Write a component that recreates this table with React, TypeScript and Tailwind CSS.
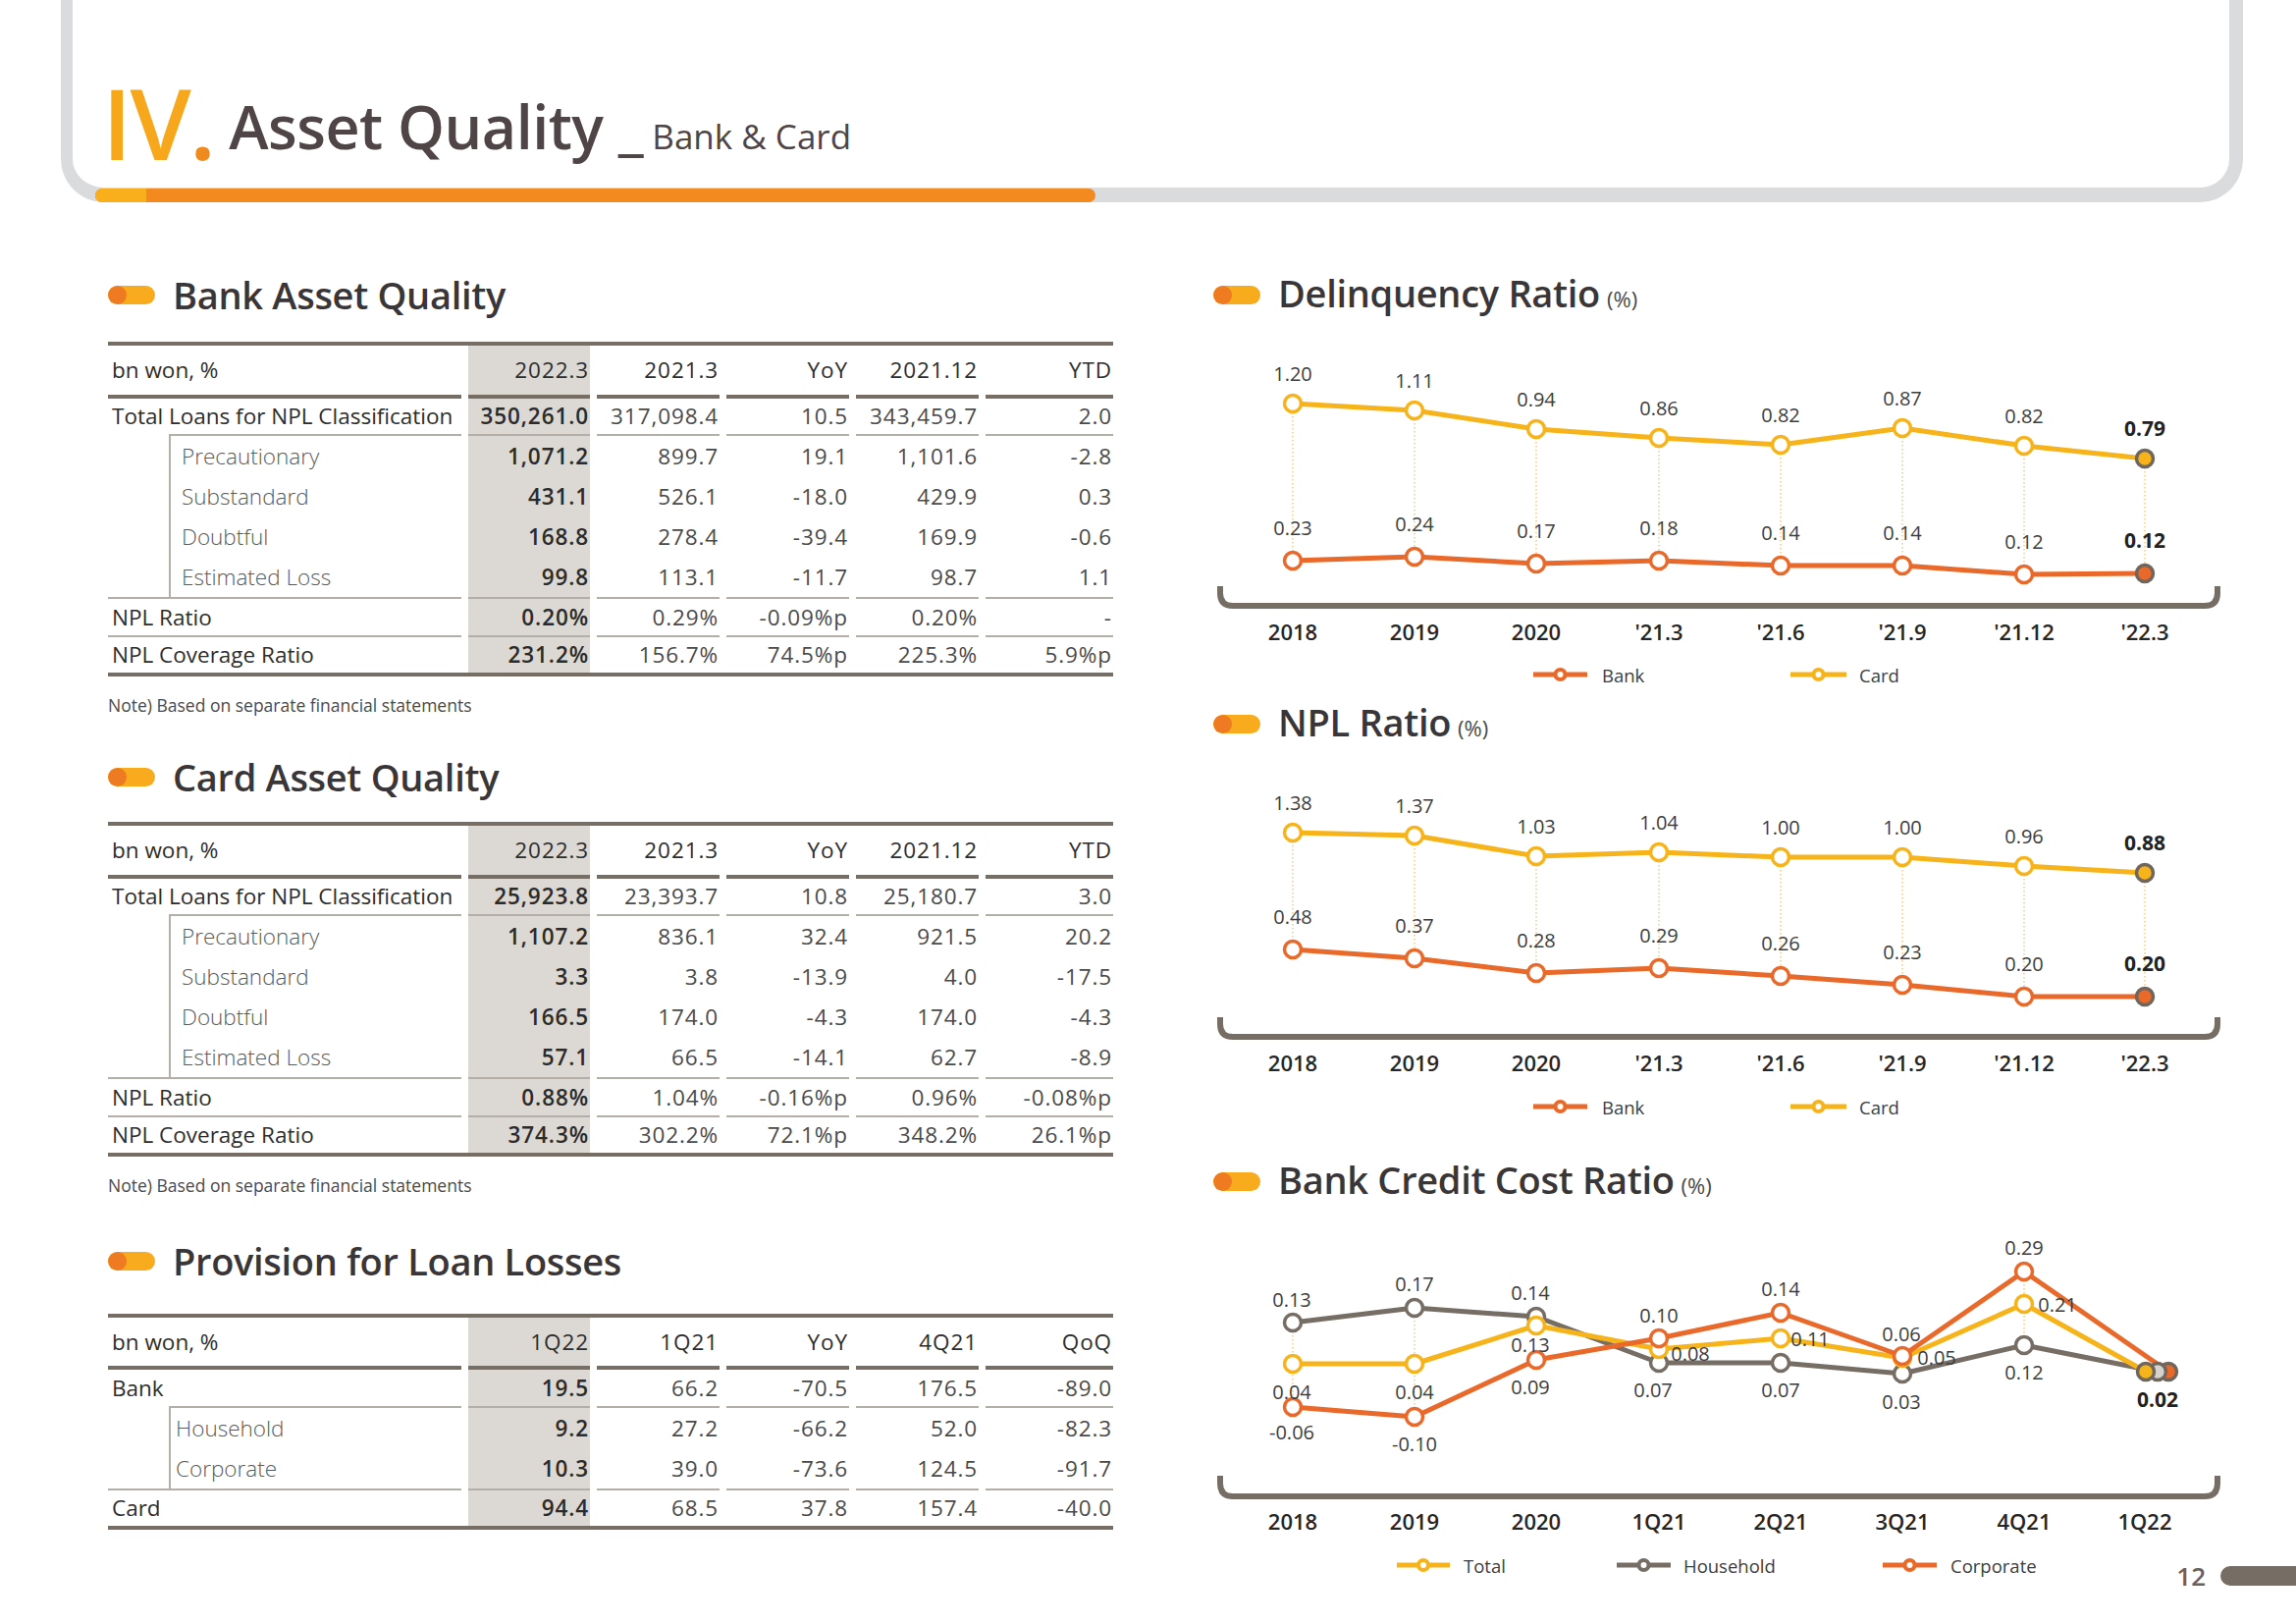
import React from "react";

// page is laid out at 1:1 pixels of the 2339x1654 slide
const XS = [1317, 1441, 1565, 1690, 1814, 1938, 2062, 2185];
const OX = 1236;

type Kind = "head" | "main" | "sub";
type Line = "thick" | "indent" | "thin" | "none";
interface Row {
  label: string;
  vals: string[];
  kind: Kind;
  h: string;
  line: Line;
}

const COLS = "grid grid-cols-[360px_124px_125px_125px_125px_130px] gap-x-[7px]";

const Pill = () => (
  <div className="flex h-[19px] w-[48px] shrink-0 overflow-hidden rounded-full bg-[#f8ab1c]">
    <div className="h-full w-[19px] rounded-full bg-[#ee7b22]" />
  </div>
);

const SectionTitle = ({ title, unit }: { title: string; unit?: string }) => (
  <div className="flex h-[60px] items-center">
    <Pill />
    <div className="ml-[18px] flex items-baseline">
      <h2 className="text-[38px] font-semibold leading-none tracking-[-0.3px] text-[#3a3637]">
        {title}
      </h2>
      {unit && <span className="ml-[7px] text-[22px] text-[#4a4a4a]">{unit}</span>}
    </div>
  </div>
);

const Bar = ({ line, first }: { line: Line; first: boolean }) => {
  if (line === "none") return null;
  if (line === "thick") return <div className="h-[4px] bg-[#766d65]" />;
  if (line === "indent" && first) return <div className="ml-[62px] h-[2px] bg-[#b3aea8]" />;
  return <div className="h-[2px] bg-[#b3aea8]" />;
};

const DataTable = ({ rows, subPad }: { rows: Row[]; subPad: string }) => (
  <div className="border-y-4 border-[#766d65] text-[22.5px]">
    {rows.map((r) => (
      <div key={r.label} className={COLS}>
        <div className="flex flex-col">
          {r.kind === "sub" ? (
            <div className={`${r.h} ml-[62px] flex items-center border-l-2 border-[#b3aea8] ${subPad} font-light text-[#5a5a5a]`}>
              {r.label}
            </div>
          ) : (
            <div className={`${r.h} flex items-center pl-[4px] text-[#2d2d2d]`}>{r.label}</div>
          )}
          <Bar line={r.line} first />
        </div>
        {r.vals.map((v, i) => (
          <div key={i} className={`flex flex-col ${i === 0 ? "bg-[#dcd9d4]" : ""}`}>
            <div
              className={`${r.h} flex items-center justify-end pr-[1px] tracking-[0.9px] ${
                r.kind === "head"
                  ? "text-[#2d2d2d]"
                  : i === 0
                  ? "font-semibold text-[#2b2b2b]"
                  : "text-[#4a4a4a]"
              }`}
            >
              {v}
            </div>
            <Bar line={r.line} first={false} />
          </div>
        ))}
      </div>
    ))}
  </div>
);

const Note = ({ className }: { className: string }) => (
  <p className={`${className} h-[26px] text-[17.5px] leading-[26px] text-[#4a4a4a]`}>
    Note) Based on separate financial statements
  </p>
);

const bankRows: Row[] = [
  { label: "bn won, %", vals: ["2022.3", "2021.3", "YoY", "2021.12", "YTD"], kind: "head", h: "h-[50px]", line: "thick" },
  { label: "Total Loans for NPL Classification", vals: ["350,261.0", "317,098.4", "10.5", "343,459.7", "2.0"], kind: "main", h: "h-[36px]", line: "indent" },
  { label: "Precautionary", vals: ["1,071.2", "899.7", "19.1", "1,101.6", "-2.8"], kind: "sub", h: "h-[41px]", line: "none" },
  { label: "Substandard", vals: ["431.1", "526.1", "-18.0", "429.9", "0.3"], kind: "sub", h: "h-[41px]", line: "none" },
  { label: "Doubtful", vals: ["168.8", "278.4", "-39.4", "169.9", "-0.6"], kind: "sub", h: "h-[41px]", line: "none" },
  { label: "Estimated Loss", vals: ["99.8", "113.1", "-11.7", "98.7", "1.1"], kind: "sub", h: "h-[41px]", line: "thin" },
  { label: "NPL Ratio", vals: ["0.20%", "0.29%", "-0.09%p", "0.20%", "-"], kind: "main", h: "h-[37px]", line: "thin" },
  { label: "NPL Coverage Ratio", vals: ["231.2%", "156.7%", "74.5%p", "225.3%", "5.9%p"], kind: "main", h: "h-[36px]", line: "none" },
];

const cardRows: Row[] = [
  { label: "bn won, %", vals: ["2022.3", "2021.3", "YoY", "2021.12", "YTD"], kind: "head", h: "h-[50px]", line: "thick" },
  { label: "Total Loans for NPL Classification", vals: ["25,923.8", "23,393.7", "10.8", "25,180.7", "3.0"], kind: "main", h: "h-[36px]", line: "indent" },
  { label: "Precautionary", vals: ["1,107.2", "836.1", "32.4", "921.5", "20.2"], kind: "sub", h: "h-[41px]", line: "none" },
  { label: "Substandard", vals: ["3.3", "3.8", "-13.9", "4.0", "-17.5"], kind: "sub", h: "h-[41px]", line: "none" },
  { label: "Doubtful", vals: ["166.5", "174.0", "-4.3", "174.0", "-4.3"], kind: "sub", h: "h-[41px]", line: "none" },
  { label: "Estimated Loss", vals: ["57.1", "66.5", "-14.1", "62.7", "-8.9"], kind: "sub", h: "h-[41px]", line: "thin" },
  { label: "NPL Ratio", vals: ["0.88%", "1.04%", "-0.16%p", "0.96%", "-0.08%p"], kind: "main", h: "h-[37px]", line: "thin" },
  { label: "NPL Coverage Ratio", vals: ["374.3%", "302.2%", "72.1%p", "348.2%", "26.1%p"], kind: "main", h: "h-[36px]", line: "none" },
];

const provRows: Row[] = [
  { label: "bn won, %", vals: ["1Q22", "1Q21", "YoY", "4Q21", "QoQ"], kind: "head", h: "h-[49px]", line: "thick" },
  { label: "Bank", vals: ["19.5", "66.2", "-70.5", "176.5", "-89.0"], kind: "main", h: "h-[37px]", line: "indent" },
  { label: "Household", vals: ["9.2", "27.2", "-66.2", "52.0", "-82.3"], kind: "sub", h: "h-[41px]", line: "none" },
  { label: "Corporate", vals: ["10.3", "39.0", "-73.6", "124.5", "-91.7"], kind: "sub", h: "h-[41px]", line: "thin" },
  { label: "Card", vals: ["94.4", "68.5", "37.8", "157.4", "-40.0"], kind: "main", h: "h-[36px]", line: "none" },
];

type Series = { color: string; ys: number[]; xs?: number[]; last: string };
type Lbl = { t: string; x: number; y: number; b?: boolean };
type Leg = { name: string; color: string; x1: number; x2: number; tx: number };

const YELLOW = "#f6b31a";
const ORANGE = "#e9692a";
const GRAY = "#766d65";

interface ChartProps {
  top: number;
  h: number;
  series: Series[];
  labels: Lbl[];
  xl: string[];
  axisTop: number;
  axisY: number;
  labelY: number;
  legendY: number;
  legend: Leg[];
  guides: number[][];
}

const Chart = ({ top, h, series, labels, xl, axisTop, axisY, labelY, legendY, legend, guides }: ChartProps) => {
  const lasts = series
    .map((s) => {
      const xs = s.xs ?? XS;
      const n = s.ys.length - 1;
      return { x: xs[n], y: s.ys[n], fill: s.last };
    })
    .sort((a, b) => b.x - a.x);

  return (
    <svg width={1060} height={h} className="block">
      <g transform={`translate(${-OX} ${-top})`} fontFamily="'Open Sans', sans-serif">
        {guides.map(([x, a, b], i) => (
          <line key={i} x1={x} x2={x} y1={a} y2={b} stroke="#f2c777" strokeWidth={1.4} strokeDasharray="1.5 2.5" />
        ))}
        {series.map((s, i) => {
          const xs = s.xs ?? XS;
          return (
            <g key={i}>
              <polyline
                points={s.ys.map((y, j) => `${xs[j]},${y}`).join(" ")}
                fill="none"
                stroke={s.color}
                strokeWidth={5}
                strokeLinejoin="round"
              />
              {s.ys.slice(0, -1).map((y, j) => (
                <circle key={j} cx={xs[j]} cy={y} r={8.5} fill="#fff" stroke={s.color} strokeWidth={3.5} />
              ))}
            </g>
          );
        })}
        {lasts.map((p, i) => (
          <circle key={i} cx={p.x} cy={p.y} r={8.5} fill={p.fill} stroke="#6f665e" strokeWidth={3.5} />
        ))}
        {labels.map((l, i) => (
          <text
            key={i}
            x={l.x}
            y={l.y}
            textAnchor="middle"
            dominantBaseline="central"
            fontSize={l.b ? 21 : 20}
            fontWeight={l.b ? 700 : 400}
            fill={l.b ? "#222" : "#3d3d3d"}
          >
            {l.t}
          </text>
        ))}
        <path
          d={`M 1243 ${axisTop} V ${axisY - 13} Q 1243 ${axisY} 1256 ${axisY} H 2246 Q 2259 ${axisY} 2259 ${axisY - 13} V ${axisTop}`}
          fill="none"
          stroke={GRAY}
          strokeWidth={6}
        />
        {xl.map((t, i) => (
          <text key={t} x={XS[i]} y={labelY} textAnchor="middle" dominantBaseline="central" fontSize={22} fontWeight={600} fill="#262626">
            {t}
          </text>
        ))}
        {legend.map((l) => (
          <g key={l.name}>
            <line x1={l.x1} x2={l.x2} y1={legendY} y2={legendY} stroke={l.color} strokeWidth={5} />
            <circle cx={(l.x1 + l.x2) / 2} cy={legendY} r={5} fill="#fff" stroke={l.color} strokeWidth={4} />
            <text x={l.tx} y={legendY} dominantBaseline="central" fontSize={18.5} fill="#3d3d3d">
              {l.name}
            </text>
          </g>
        ))}
      </g>
    </svg>
  );
};

const mk = (vals: string[], ys: number[], off: number): Lbl[] =>
  vals.map((t, i) => ({ t, x: XS[i], y: ys[i] - off, b: i === vals.length - 1 }));

const quarterAxis = ["2018", "2019", "2020", "'21.3", "'21.6", "'21.9", "'21.12", "'22.3"];
const bankCardLegend: Leg[] = [
  { name: "Bank", color: ORANGE, x1: 1562, x2: 1617, tx: 1632 },
  { name: "Card", color: YELLOW, x1: 1824, x2: 1881, tx: 1894 },
];

const delCard = [411, 418, 437, 446, 453, 436, 454, 467];
const delBank = [571, 567, 574, 571, 576, 576, 585, 584];
const nplCard = [848, 851, 872, 868, 873, 873, 882, 889];
const nplBank = [967, 976, 991, 986, 994, 1003, 1015, 1015];

const ccHouse = [1347, 1332, 1341, 1388, 1388, 1399, 1370, 1397];
const ccTotal = [1389, 1389, 1350, 1374, 1363, 1383, 1328, 1397];
const ccCorp = [1433, 1443, 1385, 1363, 1337, 1381, 1295, 1397];

const ccLabels: Lbl[] = [
  { t: "0.13", x: 1316, y: 1323 },
  { t: "0.17", x: 1441, y: 1307 },
  { t: "0.14", x: 1559, y: 1316 },
  { t: "0.10", x: 1690, y: 1339 },
  { t: "0.14", x: 1814, y: 1312 },
  { t: "0.06", x: 1937, y: 1358 },
  { t: "0.29", x: 2062, y: 1270 },
  { t: "0.21", x: 2096, y: 1328 },
  { t: "0.13", x: 1559, y: 1369 },
  { t: "0.08", x: 1722, y: 1378 },
  { t: "0.11", x: 1844, y: 1363 },
  { t: "0.05", x: 1973, y: 1382 },
  { t: "0.12", x: 2062, y: 1397 },
  { t: "0.04", x: 1316, y: 1417 },
  { t: "0.04", x: 1441, y: 1417 },
  { t: "0.09", x: 1559, y: 1412 },
  { t: "0.07", x: 1684, y: 1415 },
  { t: "0.07", x: 1814, y: 1415 },
  { t: "0.03", x: 1937, y: 1427 },
  { t: "0.02", x: 2198, y: 1425, b: true },
  { t: "-0.06", x: 1316, y: 1458 },
  { t: "-0.10", x: 1441, y: 1470 },
];

export default function App() {
  return (
    <div className="relative h-[1654px] w-[2339px] overflow-hidden bg-white font-['Open_Sans',sans-serif]">
      {/* header frame */}
      <header className="relative ml-[62px] h-[206px] w-[2223px] rounded-b-[44px] border-b-[15px] border-l-[12px] border-r-[14px] border-[#d9dbdd]">
        <div className="flex items-baseline pl-[30px] pt-[63px]">
          <span className="translate-y-[11px] text-[100px] font-semibold leading-none tracking-[-2px] text-[#f6a71c]">
            IV<span className="text-[#ef8a1e]">.</span>
          </span>
          <span className="ml-[15px] text-[61px] font-semibold leading-none tracking-[-0.5px] text-[#4f4546]">
            Asset Quality _
          </span>
          <span className="ml-[9px] text-[35px] leading-none text-[#4f4546]">Bank &amp; Card</span>
        </div>
        <div className="absolute bottom-[-15px] left-[23px] flex h-[14px] w-[1019px] overflow-hidden rounded-full bg-[#f28a1f]">
          <div className="h-full w-[52px] bg-[#f9ae1b]" />
        </div>
      </header>

      <div className="mt-[64px] flex">
        {/* left: tables */}
        <div className="ml-[110px] w-[1024px]">
          <SectionTitle title="Bank Asset Quality" />
          <div className="mt-[18px]">
            <DataTable rows={bankRows} subPad="pl-[11px]" />
          </div>
          <Note className="mt-[16px]" />

          <div className="mt-[30px]">
            <SectionTitle title="Card Asset Quality" />
          </div>
          <div className="mt-[16px]">
            <DataTable rows={cardRows} subPad="pl-[11px]" />
          </div>
          <Note className="mt-[16px]" />

          <div className="mt-[34px]">
            <SectionTitle title="Provision for Loan Losses" />
          </div>
          <div className="mt-[24px]">
            <DataTable rows={provRows} subPad="pl-[5px]" />
          </div>
        </div>

        {/* right: charts */}
        <div className="ml-[102px] w-[1060px]">
          <SectionTitle title="Delinquency Ratio" unit="(%)" />
          <Chart
            top={330}
            h={377}
            series={[
              { color: YELLOW, ys: delCard, last: YELLOW },
              { color: ORANGE, ys: delBank, last: ORANGE },
            ]}
            labels={[
              ...mk(["1.20", "1.11", "0.94", "0.86", "0.82", "0.87", "0.82", "0.79"], delCard, 31),
              ...mk(["0.23", "0.24", "0.17", "0.18", "0.14", "0.14", "0.12", "0.12"], delBank, 34),
            ]}
            xl={quarterAxis}
            axisTop={597}
            axisY={617}
            labelY={643}
            legendY={687}
            legend={bankCardLegend}
            guides={XS.map((x, i) => [x, delCard[i] + 9, delBank[i] - 9])}
          />

          <SectionTitle title="NPL Ratio" unit="(%)" />
          <Chart
            top={767}
            h={406}
            series={[
              { color: YELLOW, ys: nplCard, last: YELLOW },
              { color: ORANGE, ys: nplBank, last: ORANGE },
            ]}
            labels={[
              ...mk(["1.38", "1.37", "1.03", "1.04", "1.00", "1.00", "0.96", "0.88"], nplCard, 31),
              ...mk(["0.48", "0.37", "0.28", "0.29", "0.26", "0.23", "0.20", "0.20"], nplBank, 34),
            ]}
            xl={quarterAxis}
            axisTop={1036}
            axisY={1056}
            labelY={1082}
            legendY={1127}
            legend={bankCardLegend}
            guides={XS.map((x, i) => [x, nplCard[i] + 9, nplBank[i] - 9])}
          />

          <SectionTitle title="Bank Credit Cost Ratio" unit="(%)" />
          <Chart
            top={1233}
            h={392}
            series={[
              { color: GRAY, ys: ccHouse, xs: [...XS.slice(0, 7), 2198], last: "#d6d2ce" },
              { color: YELLOW, ys: ccTotal, xs: [...XS.slice(0, 7), 2186], last: YELLOW },
              { color: ORANGE, ys: ccCorp, xs: [...XS.slice(0, 7), 2209], last: ORANGE },
            ]}
            labels={ccLabels}
            xl={["2018", "2019", "2020", "1Q21", "2Q21", "3Q21", "4Q21", "1Q22"]}
            axisTop={1503}
            axisY={1524}
            labelY={1549}
            legendY={1594}
            legend={[
              { name: "Total", color: YELLOW, x1: 1423, x2: 1477, tx: 1491 },
              { name: "Household", color: GRAY, x1: 1647, x2: 1702, tx: 1715 },
              { name: "Corporate", color: ORANGE, x1: 1918, x2: 1973, tx: 1987 },
            ]}
            guides={[
              [1317, 1356, 1424],
              [1441, 1341, 1434],
              [2062, 1304, 1361],
            ]}
          />
        </div>
      </div>

      {/* page number */}
      <div className="absolute bottom-[36px] right-0 flex items-center gap-[15px]">
        <span className="text-[26px] font-semibold leading-none text-[#6b625b]">12</span>
        <div className="h-[20px] w-[77px] rounded-l-full bg-[#766d65]" />
      </div>
    </div>
  );
}
